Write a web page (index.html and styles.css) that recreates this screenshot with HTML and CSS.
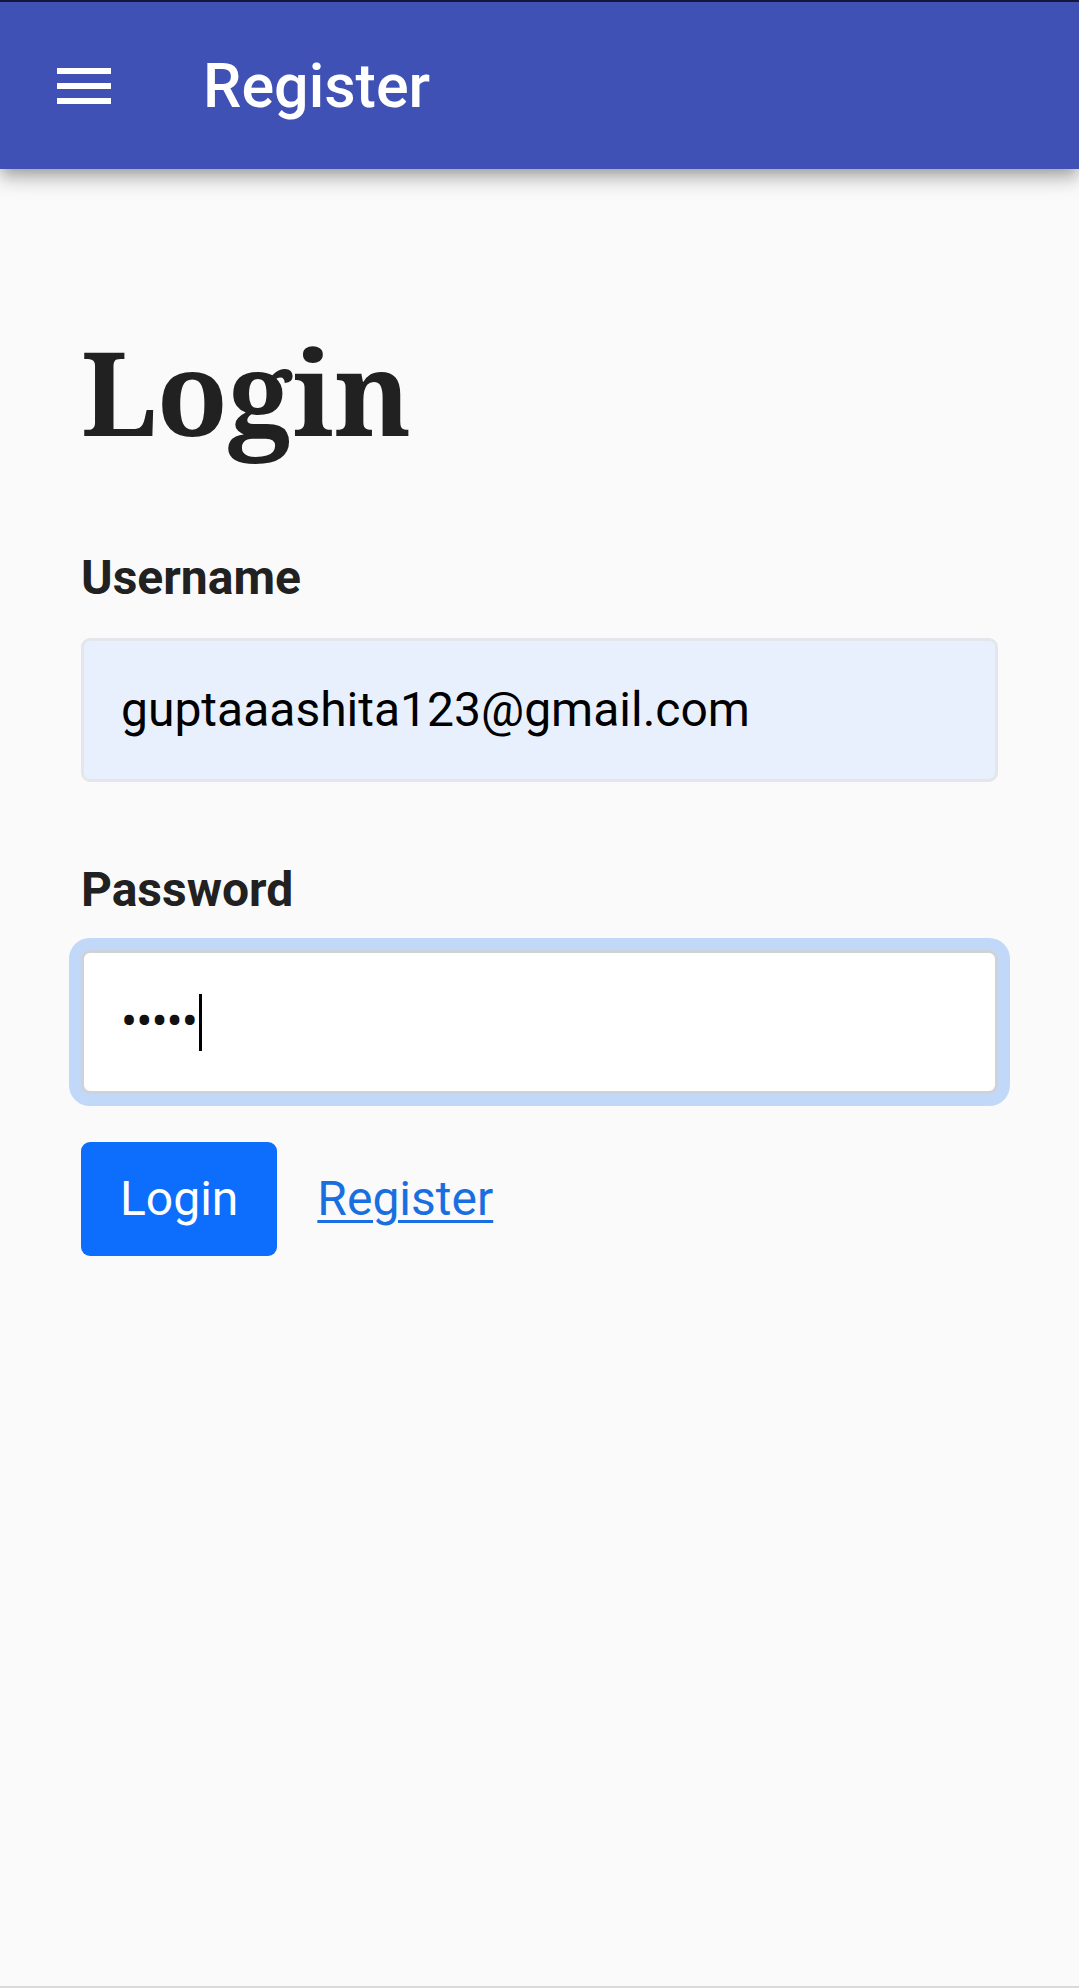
FILE: index.html
```html
<!DOCTYPE html>
<html lang="en">
<head>
<meta charset="utf-8">
<title>Register</title>
<link rel="stylesheet" href="styles.css">
</head>
<body>
<header class="app-bar">
  <button class="menu-btn" aria-label="Menu">
    <svg viewBox="0 0 24 24" width="72" height="72" aria-hidden="true">
      <path d="M3 6h18v2H3zM3 11h18v2H3zM3 16h18v2H3z" fill="#ffffff"/>
    </svg>
  </button>
  <h2 class="app-title">Register</h2>
</header>
<main class="content">
  <h1 class="page-title">Login</h1>
  <form class="login-form">
    <div class="field">
      <label class="field-label" for="username">Username</label>
      <div class="input autofill" id="username">guptaaashita123@gmail.com</div>
    </div>
    <div class="field field-last">
      <label class="field-label" for="password">Password</label>
      <div class="input focused" id="password"><span class="dots">•••••</span><span class="caret"></span></div>
    </div>
    <div class="actions">
      <button type="button" class="btn-primary">Login</button>
      <a class="link" href="#">Register</a>
    </div>
  </form>
</main>
</body>
</html>
```
FILE: styles.css
```css
html, body {
  margin: 0;
  padding: 0;
}
body {
  background: #fafafa;
  font-family: Roboto, "Noto Sans", "Liberation Sans", sans-serif;
  color: #212529;
  min-height: 100vh;
  box-sizing: border-box;
  border-bottom: 2px solid #d9d9d9;
}
.app-bar {
  height: 167px;
  border-top: 2px solid #14173a;
  background: #3f51b5;
  display: flex;
  align-items: center;
  padding-left: 48px;
  box-shadow: 0 6px 12px -3px rgba(0,0,0,.2), 0 12px 15px 0 rgba(0,0,0,.14), 0 3px 30px 0 rgba(0,0,0,.12);
  position: relative;
}
.menu-btn {
  width: 72px;
  height: 72px;
  padding: 0;
  margin: 0;
  border: 0;
  background: none;
  display: block;
}
.menu-btn svg {
  display: block;
}
.app-title {
  margin: 0 0 0 83px;
  font-family: Roboto, sans-serif;
  font-weight: 500;
  font-size: 61px;
  line-height: 72px;
  color: #ffffff;
}
.content {
  padding: 150px 81px 0 81px;
}
.page-title {
  margin: 0 0 79px 0;
  font-family: "Noto Serif", "DejaVu Serif", serif;
  font-weight: 700;
  font-size: 116px;
  line-height: 144px;
  color: #212121;
}
.login-form {
  margin: 0;
}
.field {
  margin-bottom: 72px;
}
.field-last {
  margin-bottom: 48px;
}
.field-label {
  display: block;
  font-family: Roboto, sans-serif;
  font-weight: 700;
  font-size: 48px;
  line-height: 72px;
  margin-bottom: 24px;
  color: #212121;
}
.input {
  box-sizing: border-box;
  height: 144px;
  width: 917px;
  border: 3px solid #e3e6ea;
  border-radius: 9px;
  padding: 0 37px;
  display: flex;
  align-items: center;
  font-family: Roboto, sans-serif;
  font-size: 48px;
  line-height: 72px;
  color: #000000;
}
.autofill {
  background: #e8f0fe;
}
.focused {
  background: #ffffff;
  border-color: #cfd2d6;
  box-shadow: 0 0 0 12px #c2d8f8;
  padding-left: 37px;
}
.dots {
  letter-spacing: -1px;
  color: #111;
}
.caret {
  display: inline-block;
  width: 3px;
  height: 57px;
  background: #000;
  margin-left: 2px;
}
.actions {
  display: flex;
  align-items: center;
  gap: 40px;
}
.btn-primary {
  height: 114px;
  padding: 0 39px;
  border: 0;
  border-radius: 9px;
  background: #0d6efd;
  color: #ffffff;
  font-family: Roboto, sans-serif;
  font-size: 48px;
  line-height: 72px;
}
.link {
  font-family: Roboto, sans-serif;
  font-size: 48px;
  line-height: 72px;
  color: #1a6fe0;
  text-decoration: underline;
  text-decoration-thickness: 3px;
  text-underline-offset: 5px;
}
```
